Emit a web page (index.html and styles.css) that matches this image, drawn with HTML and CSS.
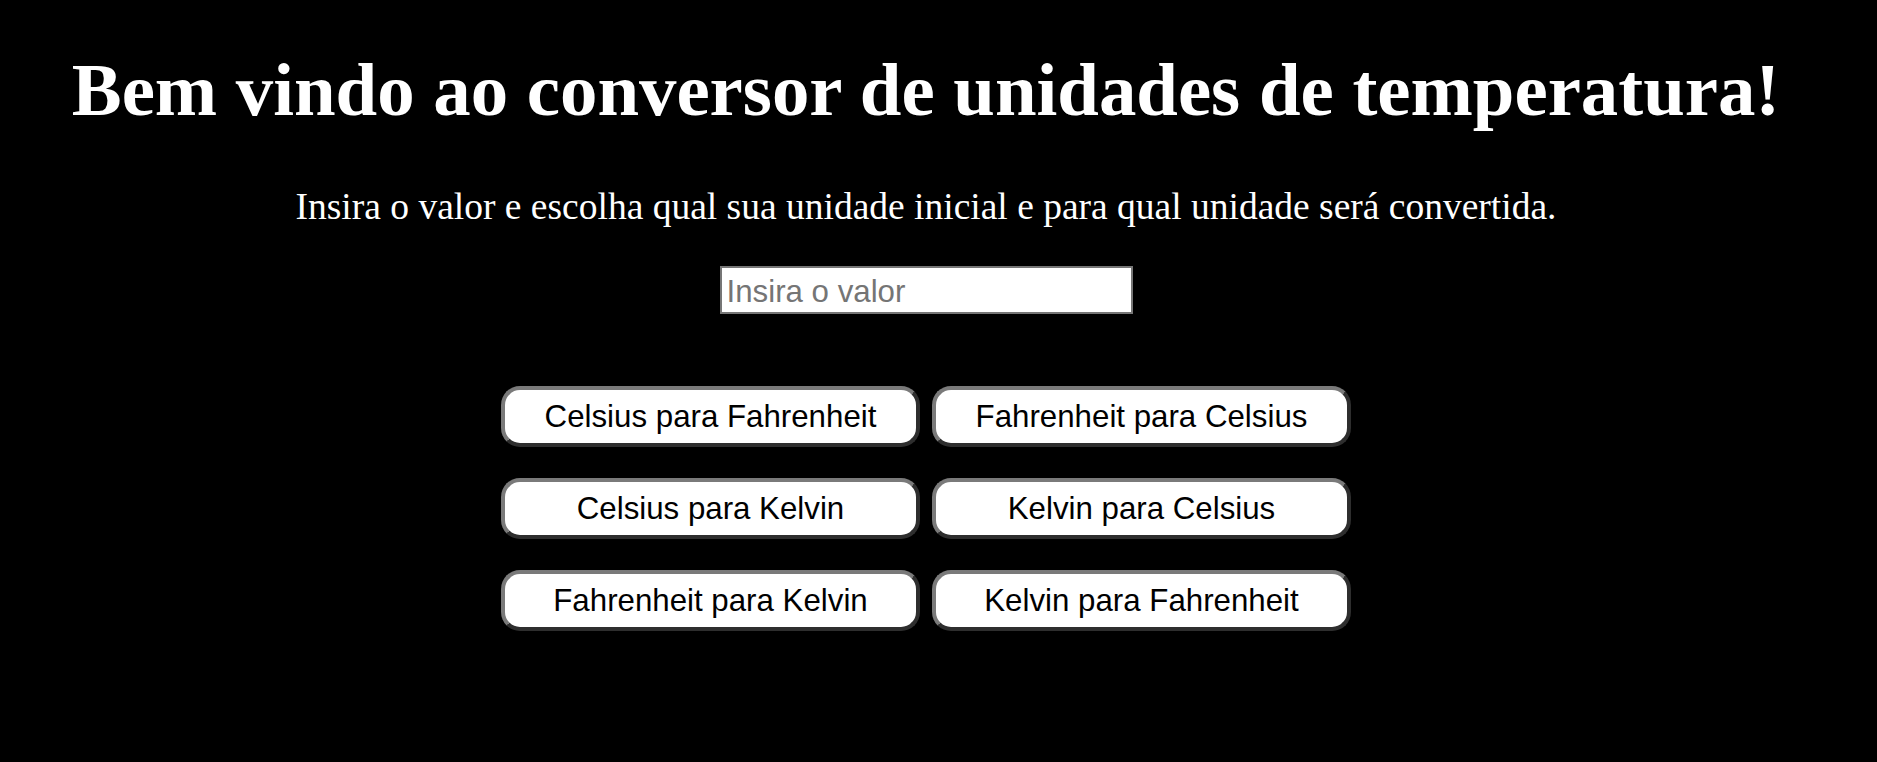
FILE: index.html
```html
<!DOCTYPE html>
<html lang="pt-BR">
<head>
<meta charset="utf-8">
<title>Conversor de temperatura</title>
<link rel="stylesheet" href="styles.css">
</head>
<body>
  <main class="page">
    <h1 class="title">Bem vindo ao conversor de unidades de temperatura!</h1>
    <p class="intro">Insira o valor e escolha qual sua unidade inicial e para qual unidade será convertida.</p>
    <input class="value-input" type="text" placeholder="Insira o valor">
    <div class="buttons">
      <button class="btn" type="button">Celsius para Fahrenheit</button>
      <button class="btn" type="button">Fahrenheit para Celsius</button>
      <button class="btn" type="button">Celsius para Kelvin</button>
      <button class="btn" type="button">Kelvin para Celsius</button>
      <button class="btn" type="button">Fahrenheit para Kelvin</button>
      <button class="btn" type="button">Kelvin para Fahrenheit</button>
    </div>
  </main>
</body>
</html>
```

FILE: styles.css
```css
html, body {
  margin: 0;
  padding: 0;
  background: #000;
}

body {
  color: #fff;
  font-family: "Liberation Serif", "Times New Roman", serif;
}

.page {
  width: 1852px;
  display: flex;
  flex-direction: column;
  align-items: center;
  text-align: center;
}

.title {
  margin: 47px 0 0;
  font-size: 74.8px;
  line-height: 86px;
  font-weight: bold;
}

.intro {
  margin: 52px 0 0;
  font-size: 37.5px;
  line-height: 43px;
}

.value-input {
  box-sizing: border-box;
  margin-top: 38px;
  width: 413px;
  height: 48px;
  padding: 3px 5px 0;
  border: 2px solid #767676;
  background: #fff;
  font-family: "Liberation Sans", Arial, sans-serif;
  font-size: 31.25px;
  color: #000;
  outline: none;
}

.value-input::placeholder {
  color: #757575;
}

.buttons {
  margin-top: 72px;
  display: grid;
  grid-template-columns: 419px 419px;
  column-gap: 12px;
  row-gap: 31px;
}

.btn {
  box-sizing: border-box;
  height: 61px;
  padding: 0;
  background: #fff;
  color: #000;
  border-style: solid;
  border-width: 4px;
  border-color: #7a7a7a #2e2e2e #2e2e2e #7a7a7a;
  border-radius: 19px;
  font-family: "Liberation Sans", Arial, sans-serif;
  font-size: 31.25px;
  cursor: pointer;
}
```
